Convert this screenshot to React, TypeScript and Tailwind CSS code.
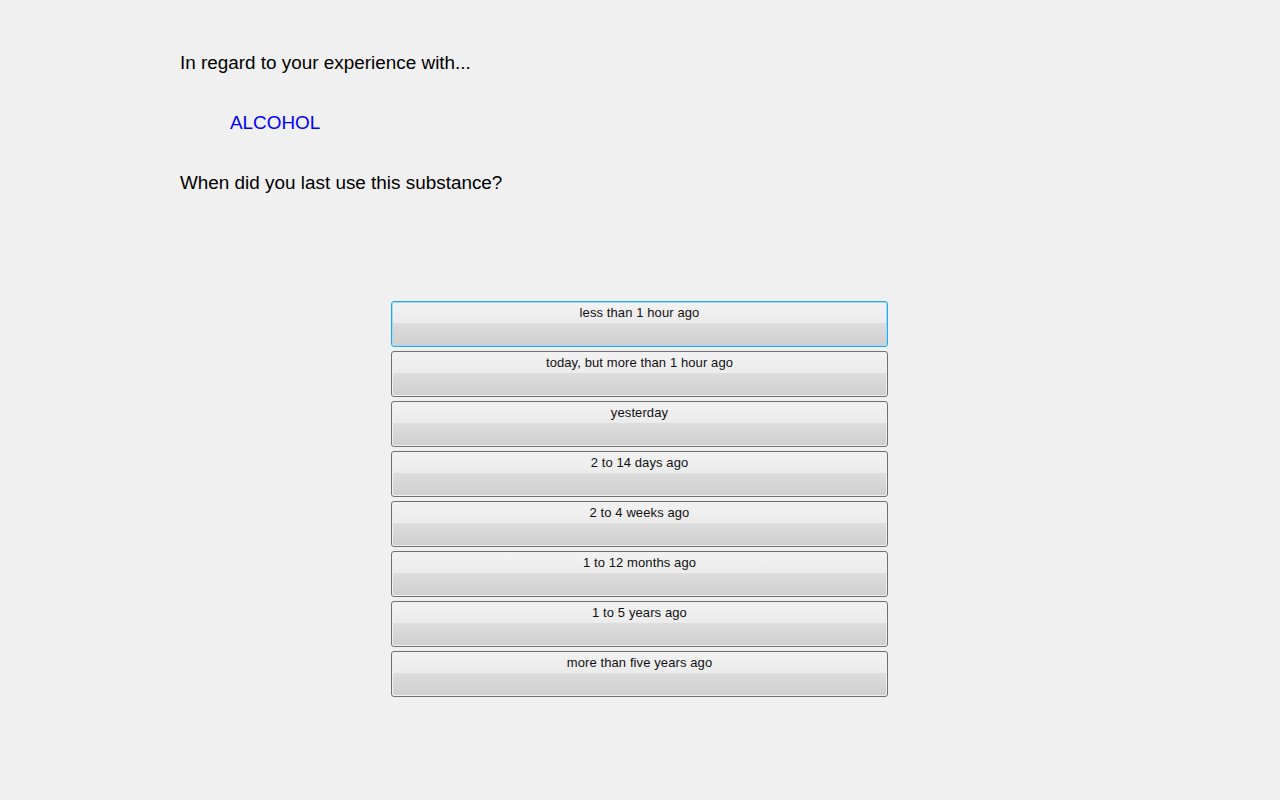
import React from "react";

const options = [
  "less than 1 hour ago",
  "today, but more than 1 hour ago",
  "yesterday",
  "2 to 14 days ago",
  "2 to 4 weeks ago",
  "1 to 12 months ago",
  "1 to 5 years ago",
  "more than five years ago",
];

export default function App() {
  return (
    <div
      className="w-[1280px] h-[800px] bg-[#f0f0f0] text-black overflow-hidden"
      style={{ fontFamily: '"Liberation Sans", Arial, sans-serif' }}
    >
      <div className="pl-[180px] pt-[52px]">
        <div className="text-[18.9px] leading-[22px]">In regard to your experience with...</div>
        <div className="mt-[38px] pl-[50px] text-[18.9px] leading-[22px] text-[#0000ff]">ALCOHOL</div>
        <div className="mt-[38px] text-[18.9px] leading-[22px]">When did you last use this substance?</div>
      </div>
      <div className="mt-[107px] ml-[391px] w-[497px] flex flex-col gap-[4px]">
        {options.map((o, i) => (
          <div
            key={o}
            className={
              "h-[46px] rounded-[3px] border p-px " +
              (i === 0
                ? "border-[#26a6e4] shadow-[inset_0_0_0_1px_#9fdcf8]"
                : "border-[#707070]")
            }
          >
            <div className="h-full rounded-[2px] bg-[linear-gradient(to_bottom,#f2f2f2_0%,#ebebeb_48%,#dddddd_48%,#cfcfcf_100%)] flex justify-center">
              <span className="text-[13px] leading-[15px] pt-[2px] text-[#111] tracking-[0.1px]">{o}</span>
            </div>
          </div>
        ))}
      </div>
    </div>
  );
}
